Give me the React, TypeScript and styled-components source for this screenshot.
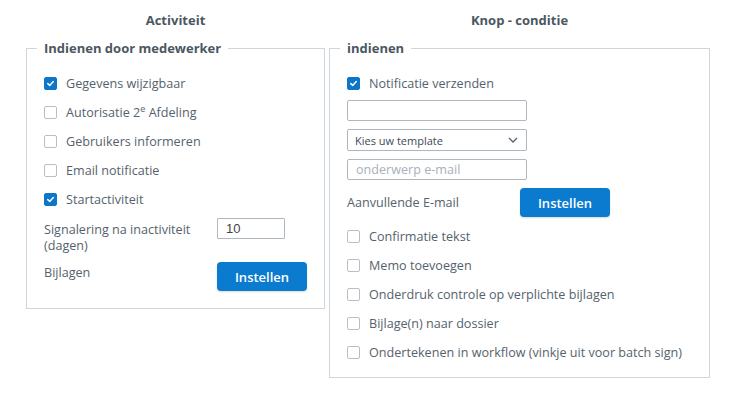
import styled, { createGlobalStyle } from "styled-components";

const GlobalStyle = createGlobalStyle`
  body {
    margin: 0;
    background: #ffffff;
    font-family: "Open Sans", "Liberation Sans", sans-serif;
    font-size: 12.6px;
    color: #55626d;
  }
`;

const leftChecks = [
  { label: "Gegevens wijzigbaar", checked: true },
  { label: "Autorisatie 2", sup: "e", rest: " Afdeling", checked: false },
  { label: "Gebruikers informeren", checked: false },
  { label: "Email notificatie", checked: false },
  { label: "Startactiviteit", checked: true },
];

const rightChecks = [
  "Confirmatie tekst",
  "Memo toevoegen",
  "Onderdruk controle op verplichte bijlagen",
  "Bijlage(n) naar dossier",
  "Ondertekenen in workflow (vinkje uit voor batch sign)",
];

const CheckBox = ({ checked }: { checked: boolean }) => (
  <Box $checked={checked}>
    {checked && (
      <svg width="9" height="9" viewBox="0 0 9 9">
        <path d="M1.8 4.6 L3.7 6.4 L7.3 2.6" fill="none" stroke="#fff" strokeWidth="1.5" strokeLinecap="round" strokeLinejoin="round" />
      </svg>
    )}
  </Box>
);

const App = () => {
  return (
    <Page>
      <GlobalStyle />
      <Column $width={299}>
        <Heading>Activiteit</Heading>
        <Group $pb={17}>
          <Legend>Indienen door medewerker</Legend>
          <Rows>
            {leftChecks.map((c) => (
              <CheckRow key={c.label}>
                <CheckBox checked={c.checked} />
                <span>
                  {c.label}
                  {c.sup && <Sup>{c.sup}</Sup>}
                  {c.rest}
                </span>
              </CheckRow>
            ))}
          </Rows>
          <FieldRow>
            <FieldLabel $pt={8}>
              Signalering na inactiviteit
              <br />
              (dagen)
            </FieldLabel>
            <NumberInput defaultValue="10" />
          </FieldRow>
          <FieldRow $mt={8}>
            <FieldLabel $pt={3}>Bijlagen</FieldLabel>
            <Button>Instellen</Button>
          </FieldRow>
        </Group>
      </Column>
      <Column $width={381}>
        <Heading>Knop - conditie</Heading>
        <Group $pb={10}>
          <Legend>indienen</Legend>
          <Rows>
            <CheckRow>
              <CheckBox checked />
              <span>Notificatie verzenden</span>
            </CheckRow>
          </Rows>
          <Stack>
            <TextInput />
            <Select>
              <span>Kies uw template</span>
              <svg width="10" height="6" viewBox="0 0 10 6">
                <path d="M1 1 L5 5 L9 1" fill="none" stroke="#55626d" strokeWidth="1.3" />
              </svg>
            </Select>
            <TextInput placeholder="onderwerp e-mail" />
          </Stack>
          <FieldRow $mt={8}>
            <FieldLabel $pt={7}>Aanvullende E-mail</FieldLabel>
            <Button>Instellen</Button>
          </FieldRow>
          <Rows $mt={5}>
            {rightChecks.map((label) => (
              <CheckRow key={label}>
                <CheckBox checked={false} />
                <span>{label}</span>
              </CheckRow>
            ))}
          </Rows>
        </Group>
      </Column>
    </Page>
  );
};
export default App;

const Page = styled.div`
  display: flex;
  gap: 4px;
  padding: 11px 0 0 26px;
  align-items: flex-start;
`;

const Column = styled.div<{ $width: number }>`
  width: ${(p) => p.$width}px;
  display: flex;
  flex-direction: column;
  gap: 10px;
`;

const Heading = styled.div`
  text-align: center;
  font-weight: 700;
  font-size: 13px;
  line-height: 18px;
  color: #4b5761;
`;

const Group = styled.fieldset<{ $pb: number }>`
  margin: 0;
  border: 1px solid #cfd6dc;
  padding: 0 0 ${(p) => p.$pb}px 17px;
  min-width: 0;
`;

const Legend = styled.legend`
  font-weight: 700;
  font-size: 13px;
  line-height: 18px;
  color: #4b5761;
  padding: 0 7px;
  margin-left: -7px;
`;

const Rows = styled.div<{ $mt?: number }>`
  display: flex;
  flex-direction: column;
  margin-top: ${(p) => (p.$mt ?? 12) + "px"};
`;

const CheckRow = styled.div`
  height: 29px;
  display: flex;
  align-items: center;
  gap: 9px;
  line-height: 18px;
`;

const Sup = styled.sup`
  font-size: 9px;
  line-height: 0;
  vertical-align: 5px;
`;

const Box = styled.div<{ $checked: boolean }>`
  width: 13px;
  height: 13px;
  box-sizing: border-box;
  border-radius: 2px;
  border: 1px solid ${(p) => (p.$checked ? "#0b76ca" : "#b7bfc6")};
  background: ${(p) => (p.$checked ? "#0b76ca" : "#ffffff")};
  display: flex;
  align-items: center;
  justify-content: center;
  flex-shrink: 0;
`;

const FieldRow = styled.div<{ $mt?: number }>`
  display: flex;
  align-items: flex-start;
  margin-top: ${(p) => (p.$mt ?? 0) + "px"};
`;

const FieldLabel = styled.div<{ $pt: number }>`
  width: 173px;
  flex-shrink: 0;
  padding-top: ${(p) => p.$pt}px;
  line-height: 16px;
`;

const NumberInput = styled.input`
  margin-top: 4px;
  width: 68px;
  height: 21px;
  box-sizing: border-box;
  border: 1px solid #aeb7bf;
  border-radius: 1px;
  padding: 0 8px;
  font-family: "Liberation Sans", Arial, sans-serif;
  font-size: 13px;
  color: #444;
  outline: none;
`;

const Button = styled.button`
  width: 90px;
  height: 29px;
  border: none;
  border-radius: 4px;
  background: #0a7bcf;
  color: #ffffff;
  font-family: "Open Sans", "Liberation Sans", sans-serif;
  font-size: 13px;
  font-weight: 600;
  box-shadow: 0 1px 2px rgba(0, 0, 0, 0.15);
  padding: 0;
`;

const Stack = styled.div`
  display: flex;
  flex-direction: column;
  gap: 8px;
  margin-top: 2px;
`;

const TextInput = styled.input`
  width: 180px;
  height: 21px;
  box-sizing: border-box;
  border: 1px solid #aeb7bf;
  border-radius: 2px;
  padding: 0 8px;
  font-family: "Open Sans", "Liberation Sans", sans-serif;
  font-size: 12.6px;
  color: #444;
  outline: none;
  &::placeholder {
    color: #a7b1ba;
  }
`;

const Select = styled.div`
  width: 180px;
  height: 22px;
  box-sizing: border-box;
  border: 1px solid #aeb7bf;
  border-radius: 2px;
  padding: 0 8px 0 7px;
  display: flex;
  align-items: center;
  justify-content: space-between;
  font-size: 11px;
  color: #3e4a54;
`;
